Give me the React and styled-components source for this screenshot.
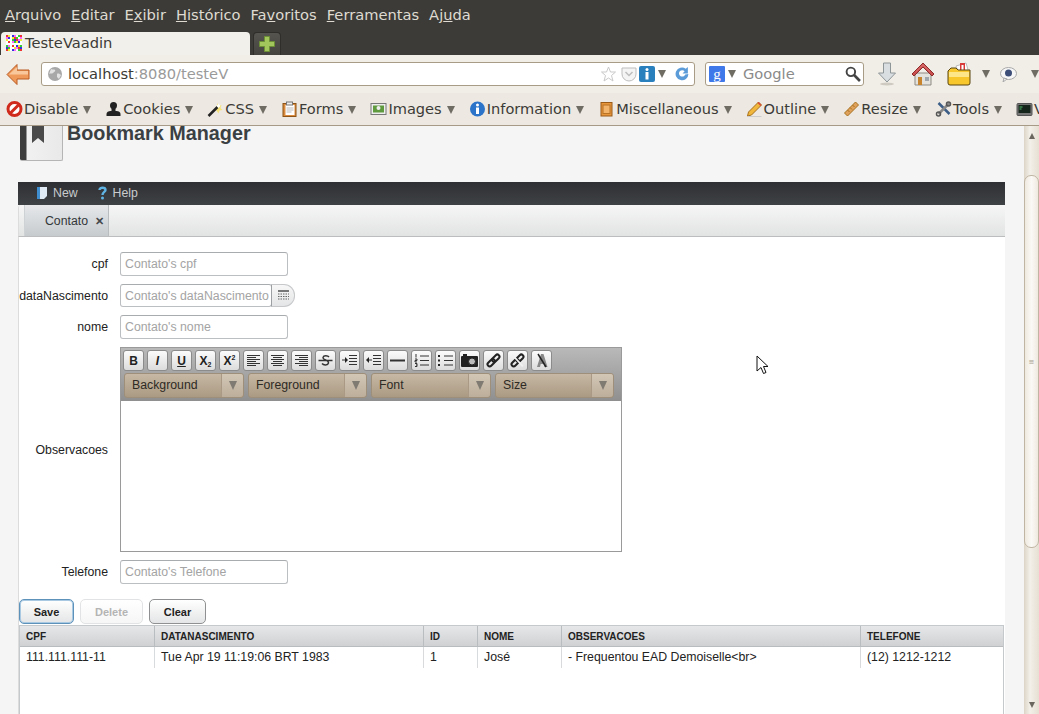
import React from "react";
import styled, { createGlobalStyle } from "styled-components";

const GlobalStyle = createGlobalStyle`
  html, body { margin: 0; padding: 0; overflow: hidden; background: #f5f5f5; }
  * { box-sizing: border-box; }
`;

const UI_FONT = `"DejaVu Sans", sans-serif`;
const WEB_FONT = `"Liberation Sans", Arial, sans-serif`;

const Window = styled.div`
  position: relative;
  width: 1039px;
  height: 714px;
  display: flex;
  flex-direction: column;
  overflow: hidden;
  font-family: ${UI_FONT};
`;

const MenuBar = styled.div`
  height: 30px;
  flex: none;
  display: flex;
  align-items: center;
  gap: 10px;
  padding: 0 0 1px 5px;
  background: #3c3b37;
  color: #dfdbd2;
  font-size: 14.67px;
`;

const TabStrip = styled.div`
  height: 25px;
  flex: none;
  display: flex;
  align-items: flex-end;
  padding-left: 1px;
  gap: 3px;
  background: #3c3b37;
`;

const Tab = styled.div`
  width: 249px;
  height: 23px;
  display: flex;
  align-items: center;
  gap: 3px;
  padding: 0 0 2px 5px;
  border-radius: 4px 4px 0 0;
  background: #f2f0ea;
  color: #3c3b37;
  font-size: 14.67px;
`;

const NewTab = styled.div`
  width: 28px;
  height: 23px;
  display: flex;
  align-items: center;
  justify-content: center;
  border: 1px solid #2f2e2b;
  border-bottom: 0;
  border-radius: 4px 4px 0 0;
  background: linear-gradient(#55544f, #45443f);
`;

const NavBar = styled.div`
  height: 38px;
  flex: none;
  display: flex;
  align-items: center;
  padding: 0 0 0 6px;
  background: #f1eee8;
`;

const BackWrap = styled.div`
  width: 35px;
  flex: none;
  display: flex;
`;

const Field = styled.div`
  height: 24px;
  display: flex;
  align-items: center;
  padding-left: ${(p) => p.$inset}px;
  border: 1px solid #a89c86;
  border-radius: 3px;
  background: #fff;
  font-size: 14.67px;
  width: ${(p) => p.$width}px;
  margin-right: ${(p) => p.$gap || 0}px;
  flex: none;
`;

const UrlHost = styled.span`
  color: #3c3b37;
  margin: -2px 0 0 6px;
`;

const UrlRest = styled.span`
  color: #9a9a9a;
  margin-top: -2px;
`;

const FieldEnd = styled.div`
  margin-left: auto;
  display: flex;
  align-items: center;
  padding-right: ${(p) => p.$pad}px;
`;

const SearchHint = styled.span`
  color: #8a8a8a;
  margin: -2px 0 0 7px;
`;

const Caret = styled.span`
  display: inline-block;
  width: 0;
  height: 0;
  flex: none;
  border-left: 4px solid transparent;
  border-right: 4px solid transparent;
  border-top: 8px solid #6f6c64;
  margin-left: ${(p) => p.$left || 0}px;
  margin-right: ${(p) => p.$right || 0}px;
  margin-top: ${(p) => p.$top || 0}px;
`;

const NavIcons = styled.div`
  display: flex;
  align-items: center;
  margin-left: 13px;
`;

const NavIcon = styled.span`
  display: flex;
  margin-left: ${(p) => p.$left || 0}px;
  margin-right: ${(p) => p.$gap || 0}px;
`;

const DevBar = styled.div`
  height: 33px;
  flex: none;
  display: flex;
  align-items: center;
  gap: 14px;
  padding: 0 0 1px 6px;
  background: #ede9e2;
  border-bottom: 1px solid #a79b88;
  color: #3c3b37;
  font-size: 14.6px;
  white-space: nowrap;
  overflow: hidden;
`;

const DevItem = styled.div`
  display: flex;
  align-items: center;
  gap: 1px;
  flex: none;
`;

const Viewport = styled.div`
  flex: 1;
  display: flex;
  min-height: 0;
`;

const Page = styled.div`
  flex: 1;
  min-width: 0;
  padding: 0 19px 0 18px;
  background: #f5f5f5;
  font-family: ${WEB_FONT};
  display: flex;
  flex-direction: column;
  overflow: hidden;
`;

const AppHeader = styled.div`
  height: 56px;
  flex: none;
  display: flex;
  align-items: flex-start;
  gap: 4px;
  padding-left: 2px;
  overflow: hidden;
`;

const BookIcon = styled.div`
  position: relative;
  width: 43px;
  height: 35px;
  border: 1px solid #b5b5b5;
  border-top: 0;
  border-left: 0;
  border-radius: 0 0 2px 2px;
  background: linear-gradient(90deg, #3d3d3d 0, #3d3d3d 6px, #f1f1f1 7px, #e9e9e9 100%);
  flex: none;
`;

const BookMark = styled.span`
  position: absolute;
  left: 12px;
  top: 0;
  width: 12px;
  height: 17px;
  background: #4a4a4a;
  clip-path: polygon(0 0, 100% 0, 100% 100%, 50% 70%, 0 100%);
`;

const AppTitle = styled.h1`
  margin: 0;
  font-size: 19.8px;
  line-height: 14px;
  font-weight: 700;
  color: #3b4043;
`;

const BlackMenu = styled.div`
  height: 23px;
  flex: none;
  display: flex;
  align-items: center;
  padding: 0 0 1px 18px;
  gap: 19px;
  background: linear-gradient(#2e2f33, #3f4245);
  color: #c9cbcd;
  font-size: 12.3px;
`;

const MenuEntry = styled.div`
  display: flex;
  align-items: center;
  gap: 5px;
`;

const Sheet = styled.div`
  flex: 1;
  min-height: 0;
  display: flex;
  flex-direction: column;
  background: #fff;
  border-radius: 3px 3px 0 0;
`;

const SheetTabs = styled.div`
  height: 32px;
  flex: none;
  display: flex;
  padding-left: 5px;
  background: linear-gradient(#f6f6f6, #e2e3e3);
  border-bottom: 1px solid #bcbdbe;
  border-left: 1px solid #dcdcdc;
  border-radius: 3px 3px 0 0;
`;

const SheetTab = styled.div`
  width: 85px;
  display: flex;
  align-items: center;
  justify-content: flex-end;
  gap: 7px;
  padding: 1px 4px 0 0;
  background: linear-gradient(#e6e8ea, #c6cbce);
  border-left: 1px solid #cfd2d4;
  border-right: 1px solid #b9bdc0;
  color: #33373a;
  font-size: 12.3px;
`;

const CloseMark = styled.span`
  font-size: 11px;
  color: #44484b;
  font-weight: 700;
`;

const SheetBody = styled.div`
  flex: 1;
  min-height: 0;
  display: flex;
  flex-direction: column;
  padding-top: 15px;
  border-left: 1px solid #dcdcdc;
`;

const Form = styled.div`
  display: grid;
  grid-template-columns: 89px auto;
  justify-content: start;
  column-gap: 12px;
  row-gap: 8px;
  align-items: center;
`;

const Label = styled.label`
  font-size: 12.3px;
  color: #222;
  text-align: right;
  white-space: nowrap;
  justify-self: end;
`;

const Input = styled.div`
  width: ${(p) => p.$width || 168}px;
  height: ${(p) => p.$height || 24}px;
  display: flex;
  align-items: center;
  padding-left: 4px;
  border: 1px solid #bcbfc2;
  border-top-color: #a9acaf;
  border-radius: 3px;
  background: #fff;
  color: #a4a4a4;
  font-size: 12.3px;
  white-space: nowrap;
  overflow: hidden;
`;

const DateWrap = styled.div`
  display: flex;
  align-items: center;
`;

const DateButton = styled.div`
  width: 24px;
  height: 23px;
  margin-left: -1px;
  display: flex;
  align-items: center;
  justify-content: center;
  border: 1px solid #c6c8ca;
  border-left-color: #9da0a3;
  border-radius: 0 11px 11px 0;
  background: linear-gradient(#f7f7f7, #e4e5e6);
`;

const Editor = styled.div`
  width: 502px;
  height: 205px;
  display: flex;
  flex-direction: column;
  border: 1px solid #9a9a9a;
  background: #fff;
`;

const EditorBar = styled.div`
  height: 53px;
  flex: none;
  display: flex;
  flex-direction: column;
  gap: 2px;
  padding: 2px 0 0 2px;
  background: linear-gradient(#b9b9b9, #8f8f8f);
`;

const ToolRow = styled.div`
  display: flex;
  gap: 3px;
`;

const ToolButton = styled.div`
  width: 21px;
  height: 21px;
  display: flex;
  align-items: center;
  justify-content: center;
  border: 1px solid #8b8b8b;
  border-radius: 3px;
  background: linear-gradient(#fbfbfb, #dcdcdc);
  color: #222;
  font-size: 12px;
  font-weight: 700;
  font-style: ${(p) => (p.$italic ? "italic" : "normal")};
  text-decoration: ${(p) => (p.$underline ? "underline" : "none")};
`;

const ToolSup = styled.span`
  font-size: 7px;
  align-self: ${(p) => (p.$low ? "flex-end" : "flex-start")};
  margin-top: ${(p) => (p.$low ? 0 : 3)}px;
  margin-bottom: ${(p) => (p.$low ? 2 : 0)}px;
`;

const SelectRow = styled.div`
  display: flex;
  gap: 4px;
  padding-left: 1px;
`;

const Select = styled.div`
  width: ${(p) => p.$width}px;
  height: 25px;
  display: flex;
  align-items: center;
  padding-left: 7px;
  border: 1px solid #9e8f7a;
  border-radius: 3px;
  background: linear-gradient(#c6b8a4, #ab9a83);
  color: #2e2a24;
  font-size: 12.3px;
  line-height: 21px;
`;

const SelectArrow = styled.span`
  margin-left: auto;
  align-self: stretch;
  width: 22px;
  display: flex;
  align-items: center;
  justify-content: center;
  border-left: 1px solid #a99985;
  background: linear-gradient(#d2c6b5, #bcae9a);
  border-radius: 0 3px 3px 0;
`;

const DownTri = styled.span`
  width: 0;
  height: 0;
  border-left: 4px solid transparent;
  border-right: 4px solid transparent;
  border-top: 9px solid #7f7a72;
`;

const Buttons = styled.div`
  display: flex;
  gap: 6px;
  margin: 15px 0 1px 0;
`;

const Button = styled.div`
  width: ${(p) => p.$width}px;
  height: 25px;
  display: flex;
  align-items: center;
  justify-content: center;
  border: 1px solid ${(p) => (p.$focus ? "#5d93bb" : p.$off ? "#e2e3e4" : "#8e9092")};
  border-radius: 5px;
  background: linear-gradient(#fff, ${(p) => (p.$off ? "#f6f6f6" : "#e4e5e6")});
  box-shadow: ${(p) => (p.$focus ? "0 0 0 1px #a9c9e2 inset" : "none")};
  color: ${(p) => (p.$off ? "#b4b4b4" : "#222")};
  font-size: 11px;
  font-weight: 700;
`;

const Table = styled.div`
  flex: 1;
  margin-right: 1px;
  border-left: 1px solid #c6c9cc;
  border-right: 1px solid #c6c9cc;
  background: #fff;
`;

const TableRow = styled.div`
  display: grid;
  grid-template-columns: 135px 269px 54px 84px 299px 1fr;
  height: ${(p) => (p.$head ? 22 : 21)}px;
  ${(p) =>
    p.$head &&
    `
    background: linear-gradient(#e6e7e9, #cfd1d3);
    border-top: 1px solid #c6c9cc;
    border-bottom: 1px solid #b9bcbf;
  `}
`;

const Cell = styled.div`
  display: flex;
  align-items: center;
  padding: 0 0 ${(p) => (p.$head ? 0 : 2)}px 6px;
  white-space: nowrap;
  overflow: hidden;
  color: #222;
  font-size: ${(p) => (p.$head ? 10 : 12.3)}px;
  font-weight: ${(p) => (p.$head ? 700 : 400)};
  border-right: 1px solid ${(p) => (p.$last ? "transparent" : p.$head ? "#babdc0" : "#d8dadc")};
`;

const ScrollBar = styled.div`
  width: 15px;
  flex: none;
  display: flex;
  flex-direction: column;
  background: linear-gradient(90deg, #dcd4c6, #f3f0ea 40%, #e6dfd2);
`;

const ScrollEnd = styled.div`
  height: ${(p) => p.$height}px;
  flex: none;
  display: flex;
  justify-content: center;
  align-items: ${(p) => (p.$up ? "flex-start" : "flex-end")};
  padding-top: ${(p) => (p.$up ? 7 : 0)}px;
  padding-bottom: ${(p) => (p.$up ? 0 : 6)}px;
`;

const ScrollThumb = styled.div`
  height: 373px;
  flex: none;
  display: flex;
  align-items: center;
  justify-content: center;
  border: 1px solid #c0b5a3;
  border-radius: 7px;
  background: linear-gradient(90deg, #efe9df, #fbf9f6 50%, #efe9df);
  color: #a59b8a;
  font-size: 7px;
  line-height: 2px;
`;

const UpTri = styled.span`
  width: 0;
  height: 0;
  border-left: 3.5px solid transparent;
  border-right: 3.5px solid transparent;
  border-bottom: 6px solid #6b675f;
`;

const ScrollDown = styled.span`
  width: 0;
  height: 0;
  border-left: 3.5px solid transparent;
  border-right: 3.5px solid transparent;
  border-top: 6px solid #6b675f;
`;

const Pointer = styled.svg`
  position: absolute;
  left: 756px;
  top: 355px;
`;

const Mnemonic = styled.span`
  text-decoration: underline;
`;

const menus = [
  ["", "A", "rquivo"],
  ["", "E", "ditar"],
  ["E", "x", "ibir"],
  ["", "H", "istórico"],
  ["Fa", "v", "oritos"],
  ["", "F", "erramentas"],
  ["Aj", "u", "da"],
];

const Favicon = () => {
  const colors = ["#e33", "#fff", "#33d", "#ee3", "#3c3", "#f6f", "#fff"];
  const cells = [];
  for (let y = 0; y < 8; y++) {
    for (let x = 0; x < 8; x++) {
      cells.push(
        <rect key={`${x}-${y}`} x={x * 2} y={y * 2} width="2" height="2" fill={colors[(x * 3 + y * 5 + x * y) % 7]} />
      );
    }
  }
  return <svg width="16" height="16">{cells}</svg>;
};

const PlusIcon = () => (
  <svg width="16" height="16" viewBox="0 0 16 16">
    <path d="M5.5 0.5h5v5h5v5h-5v5h-5v-5h-5v-5h5z" fill="#a3c65c" stroke="#6d8f35" />
  </svg>
);

const BackArrow = () => (
  <svg width="24" height="23" viewBox="0 0 24 23">
    <path d="M11 1.5 1 11.5l10 10v-5.5h12V7H11z" fill="#ef9a5a" stroke="#b85a22" />
    <path d="M3 11.5h19V8H11V4z" fill="#f9c79c" />
  </svg>
);

const Globe = () => (
  <svg width="14" height="14" viewBox="0 0 14 14">
    <circle cx="7" cy="7" r="7" fill="#a8a8a8" />
    <path d="M3 2c2 1 3 0 4 1s-1 2-2 3-3 0-4 1M9 7c1-1 3 0 4 1l-2 4-2-2z" fill="#e2e2e2" />
  </svg>
);

const Star = () => (
  <svg width="17" height="16" viewBox="0 0 16 16">
    <path d="M8 1l2 5h5l-4 3.500 1.500 5.500L8 12l-4.500 3L5 9.500 1 6h5z" fill="#fff" stroke="#c9c9c9" />
  </svg>
);

const Pocket = () => (
  <svg width="16" height="15" viewBox="0 0 16 15">
    <path d="M1 1h14v6a7 7 0 0 1-14 0z" fill="#f4f4f4" stroke="#bdbdbd" />
    <path d="M4.500 5 8 8.500 11.500 5" fill="none" stroke="#bdbdbd" strokeWidth="1.500" />
  </svg>
);

const InfoBadge = () => (
  <svg width="16" height="16" viewBox="0 0 16 16">
    <rect width="16" height="16" rx="2" fill="#2a7fbd" />
    <circle cx="8" cy="3.500" r="1.500" fill="#fff" />
    <rect x="6.500" y="6" width="3" height="7.500" fill="#fff" />
  </svg>
);

const Reload = () => (
  <svg width="16" height="16" viewBox="0 0 15 15">
    <path d="M13.500 7.500a6 6 0 1 1-2.500-5l2-1.500v6H8l2-2a3 3 0 1 0 .5 3z" fill="#5a9bd8" />
  </svg>
);

const GoogleBadge = () => (
  <svg width="16" height="16" viewBox="0 0 16 16">
    <rect width="16" height="16" rx="1" fill="#3f78e8" />
    <text x="8" y="13" textAnchor="middle" fontFamily="Liberation Serif, serif" fontSize="15" fill="#fff">g</text>
  </svg>
);

const Magnifier = () => (
  <svg width="16" height="16" viewBox="0 0 15 15">
    <circle cx="5.500" cy="5.500" r="4" fill="#fff" stroke="#444" strokeWidth="1.800" />
    <path d="M8.500 8.500 14 14" stroke="#444" strokeWidth="2.500" />
  </svg>
);

const DownloadArrow = () => (
  <svg width="20" height="24" viewBox="0 0 20 24">
    <path d="M6.500 1h7v10H18.500L10 20 1.500 11H6.500z" fill="#d9dee0" stroke="#8f9698" />
    <ellipse cx="10" cy="22" rx="7" ry="1.500" fill="#cfcac1" />
  </svg>
);

const HomeIcon = () => (
  <svg width="24" height="24" viewBox="0 0 24 24">
    <path d="M4 11h16v12H4z" fill="#e4e2dc" stroke="#8f8b83" />
    <path d="M12 1 1 12l2 2 9-9 9 9 2-2z" fill="#c94f4f" stroke="#8f2c2c" />
    <path d="M12 2 5 9v1l7-6 7 6V9z" fill="#d96a6a" />
    <rect x="7" y="15" width="4" height="8" fill="#c8842c" />
    <rect x="14" y="15" width="4" height="4" fill="#9fa7ad" />
  </svg>
);

const FolderIcon = () => (
  <svg width="25" height="24" viewBox="0 0 25 24">
    <path d="M9 4l10-3 3 10H12z" fill="#fff" stroke="#bbb" />
    <rect x="13" y="1" width="5" height="7" fill="#d83a3a" />
    <rect x="14.500" y="3" width="2" height="6" fill="#fff" />
    <path d="M1 9l3-3h5l2 2h12v13a2 2 0 0 1-2 2H3a2 2 0 0 1-2-2z" fill="#f7c72c" stroke="#5b4610" />
    <path d="M2 10h20v5H2z" fill="#fde68a" />
  </svg>
);

const ChatIcon = () => (
  <svg width="17" height="15" viewBox="0 0 17 15">
    <ellipse cx="8.500" cy="6.500" rx="8" ry="6" fill="#f7f7f7" stroke="#a8a8a8" />
    <circle cx="8.500" cy="6" r="3.500" fill="#3d4f78" />
    <path d="M4 11l-1 4 4-3z" fill="#f7f7f7" stroke="#a8a8a8" />
  </svg>
);

const devIcons = {
  disable: (
    <>
      <circle cx="8" cy="8" r="6.500" fill="#fff" stroke="#cf2a1c" strokeWidth="3" />
      <path d="M12 4l-8 8" stroke="#cf2a1c" strokeWidth="3" />
    </>
  ),
  cookies: (
    <>
      <circle cx="8" cy="4.500" r="3.500" fill="#222" />
      <rect x="6" y="6" width="4" height="5" fill="#222" />
      <path d="M1 15v-2c0-2 2-3 4-3h6c2 0 4 1 4 3v2z" fill="#222" />
    </>
  ),
  css: (
    <>
      <path d="M10 2l1 3 3-1-1 3 2 2-3 .5-1 3-2-3H7l2-2z" fill="#f5e27a" />
      <path d="M1 15 10 6" stroke="#222" strokeWidth="2.500" />
      <path d="M10 6 12 4" stroke="#fff" strokeWidth="2.500" />
    </>
  ),
  forms: (
    <>
      <rect x="1.500" y="2.500" width="13" height="13" fill="#d98a3c" stroke="#8c5418" />
      <rect x="4" y="4" width="9" height="10" fill="#fff" />
      <rect x="5" y="1" width="6" height="3" fill="#eee" stroke="#777" />
      <path d="M5 7h7M5 9h7M5 11h5" stroke="#bbb" />
    </>
  ),
  images: (
    <>
      <rect x="0.500" y="2.500" width="15" height="11" fill="#eee" stroke="#777" />
      <rect x="2.500" y="4.500" width="11" height="7" fill="#5f9a3f" />
      <circle cx="8" cy="7" r="2" fill="#eee" />
    </>
  ),
  info: (
    <>
      <circle cx="8" cy="8" r="7.500" fill="#2b74c9" />
      <circle cx="8" cy="4" r="1.500" fill="#fff" />
      <rect x="6.500" y="6.500" width="3" height="6.500" fill="#fff" />
    </>
  ),
  misc: (
    <>
      <rect x="2.500" y="1.500" width="11" height="13.500" fill="#e8963c" stroke="#9a5b18" />
      <rect x="4.500" y="4" width="7" height="8.500" fill="#f2b36a" stroke="#b87325" />
    </>
  ),
  outline: (
    <>
      <path d="M1 15l1-4L12 1l3 3L5 14z" fill="#f0b73c" stroke="#a8701c" />
      <path d="M11 2l3 3 1-1-3-3z" fill="#d8453a" />
      <path d="M1 15.500h14" stroke="#ccc" />
    </>
  ),
  resize: (
    <>
      <path d="M1 12 12 1l3 3L4 15z" fill="#dfa05c" stroke="#a8701c" />
      <path d="M4 9l2 2M6.500 6.500l2 2M9 4l2 2" stroke="#a8701c" />
    </>
  ),
  tools: (
    <>
      <path d="M3 2l11 11" stroke="#3b5d86" strokeWidth="2.500" />
      <path d="M14 2 3 13" stroke="#888" strokeWidth="2.500" />
      <circle cx="3" cy="13" r="2" fill="none" stroke="#555" strokeWidth="1.500" />
      <circle cx="13" cy="3" r="2" fill="none" stroke="#555" strokeWidth="1.500" />
    </>
  ),
  view: (
    <>
      <rect x="0.500" y="2.500" width="15" height="12" rx="1" fill="#777" stroke="#555" />
      <rect x="2" y="4" width="12" height="8" fill="#16251c" />
      <path d="M3 6h3M3 8h2" stroke="#4fc06a" />
    </>
  ),
};

const devItems = [
  ["disable", "Disable"],
  ["cookies", "Cookies"],
  ["css", "CSS"],
  ["forms", "Forms"],
  ["images", "Images"],
  ["info", "Information"],
  ["misc", "Miscellaneous"],
  ["outline", "Outline"],
  ["resize", "Resize"],
  ["tools", "Tools"],
  ["view", "View"],
];

// formatting glyphs of the rich text toolbar
const Glyph = ({ d, width = 15, strokeWidth = 1, children }) => (
  <svg width={width} height="13" viewBox={`0 0 ${width} 13`}>
    <path d={d} stroke="#333" strokeWidth={strokeWidth} fill="none" />
    {children}
  </svg>
);

const Chain = ({ broken }) => (
  <svg width="15" height="15" viewBox="0 0 14 14">
    <g transform="rotate(-45 7 7)" fill="none" stroke="#222" strokeWidth="1.900">
      <rect x="0" y="5" width="8" height="4" rx="2" />
      <rect x="6" y="5" width="8" height="4" rx="2" />
    </g>
    {broken && <path d="M2 1.500 12 12.500" stroke="#f2f2f2" strokeWidth="1.500" />}
  </svg>
);

const toolIcons = [
  <ToolButton key="b">B</ToolButton>,
  <ToolButton key="i" $italic>I</ToolButton>,
  <ToolButton key="u" $underline>U</ToolButton>,
  <ToolButton key="sub">X<ToolSup $low>2</ToolSup></ToolButton>,
  <ToolButton key="sup">X<ToolSup>2</ToolSup></ToolButton>,
  <ToolButton key="al">
    <Glyph d="M1 1.500h13M1 3.500h9M1 5.500h13M1 7.500h9M1 9.500h13M1 11.500h9" />
  </ToolButton>,
  <ToolButton key="ac">
    <Glyph d="M1 1.500h13M3 3.500h9M1 5.500h13M3 7.500h9M1 9.500h13M3 11.500h9" />
  </ToolButton>,
  <ToolButton key="ar">
    <Glyph d="M1 1.500h13M5 3.500h9M1 5.500h13M5 7.500h9M1 9.500h13M5 11.500h9" />
  </ToolButton>,
  <ToolButton key="st">
    <Glyph d="M11 3C10 1.500 5.500 1 5 3.500c-.5 2.500 6 2.500 5.500 5.500-.5 2.500-5 2.500-6.500.5M0.500 6.500h14" strokeWidth={1.400} />
  </ToolButton>,
  <ToolButton key="in">
    <Glyph d="M7 1.500h8M7 4.500h8M7 7.500h8M7 10.500h8M0 6h3">
      <path d="M3 3l3 3-3 3z" fill="#222" />
    </Glyph>
  </ToolButton>,
  <ToolButton key="out">
    <Glyph d="M7 1.500h8M7 4.500h8M7 7.500h8M7 10.500h8M3 6h3">
      <path d="M3 3 0 6l3 3z" fill="#222" />
    </Glyph>
  </ToolButton>,
  <ToolButton key="hr">
    <Glyph d="M0 6.500h15" strokeWidth={2} />
  </ToolButton>,
  <ToolButton key="ol">
    <Glyph d="M2 0v3.500M1 5h2v1.500H1V8h2M1 9.500h2v3H1M2 11h1M6 2h9M6 6.500h9M6 11h9" />
  </ToolButton>,
  <ToolButton key="ul">
    <Glyph d="M6 2h9M6 6.500h9M6 11h9">
      <path d="M0 1h2v2H0zM0 5.500h2v2H0zM0 10h2v2H0z" fill="#222" />
    </Glyph>
  </ToolButton>,
  <ToolButton key="img">
    <svg width="17" height="13" viewBox="0 0 17 13">
      <rect x="0" y="2" width="17" height="11" rx="1" fill="#222" />
      <rect x="2" y="0" width="4" height="2" fill="#222" />
      <circle cx="11" cy="7.500" r="3.500" fill="#bbb" stroke="#222" />
    </svg>
  </ToolButton>,
  <ToolButton key="ln"><Chain /></ToolButton>,
  <ToolButton key="un"><Chain broken /></ToolButton>,
  <ToolButton key="rf">
    <svg width="14" height="15" viewBox="0 0 14 15">
      <path d="M6 1h2.500l4 13H9.500l-.7-3H5.700L5 14H2z" fill="#888" />
      <path d="M3 1l8 13" stroke="#222" strokeWidth="1.500" />
    </svg>
  </ToolButton>,
];

const selects = [
  ["Background", 120],
  ["Foreground", 119],
  ["Font", 120],
  ["Size", 119],
];

const columns = ["CPF", "DATANASCIMENTO", "ID", "NOME", "OBSERVACOES", "TELEFONE"];
const row = [
  "111.111.111-11",
  "Tue Apr 19 11:19:06 BRT 1983",
  "1",
  "José",
  "- Frequentou EAD Demoiselle<br>",
  "(12) 1212-1212",
];

const App = () => (
  <Window>
    <GlobalStyle />
    <MenuBar>
      {menus.map(([pre, key, post]) => (
        <span key={pre + key + post}>
          {pre}
          <Mnemonic>{key}</Mnemonic>
          {post}
        </span>
      ))}
    </MenuBar>
    <TabStrip>
      <Tab>
        <Favicon />
        TesteVaadin
      </Tab>
      <NewTab>
        <PlusIcon />
      </NewTab>
    </TabStrip>
    <NavBar>
      <BackWrap>
        <BackArrow />
      </BackWrap>
      <Field $width={654} $gap={10} $inset={6}>
        <Globe />
        <UrlHost>localhost</UrlHost>
        <UrlRest>:8080/testeV</UrlRest>
        <FieldEnd $pad={4}>
          <NavIcon $gap={4}><Star /></NavIcon>
          <NavIcon $gap={2}><Pocket /></NavIcon>
          <InfoBadge />
          <Caret $left={3} $right={8} />
          <Reload />
        </FieldEnd>
      </Field>
      <Field $width={159} $inset={3}>
        <GoogleBadge />
        <Caret $left={3} />
        <SearchHint>Google</SearchHint>
        <FieldEnd $pad={2}>
          <Magnifier />
        </FieldEnd>
      </Field>
      <NavIcons>
        <NavIcon $gap={14}><DownloadArrow /></NavIcon>
        <NavIcon $gap={12}><HomeIcon /></NavIcon>
        <NavIcon $gap={10}><FolderIcon /></NavIcon>
        <Caret />
        <NavIcon $left={10} $gap={14}><ChatIcon /></NavIcon>
        <Caret />
      </NavIcons>
    </NavBar>
    <DevBar>
      {devItems.map(([icon, label]) => (
        <DevItem key={label}>
          <svg width="17" height="16" viewBox="0 0 16 16">{devIcons[icon]}</svg>
          {label}
          <Caret $left={4} $top={2} />
        </DevItem>
      ))}
    </DevBar>
    <Viewport>
      <Page>
        <AppHeader>
          <BookIcon><BookMark /></BookIcon>
          <AppTitle>Bookmark Manager</AppTitle>
        </AppHeader>
        <BlackMenu>
          <MenuEntry>
            <svg width="12" height="14" viewBox="0 0 12 14">
              <path d="M1 1h10v9l-3 3H1z" fill="#dfeaf4" />
              <path d="M1 1h3v12H1z" fill="#3f8fd0" />
            </svg>
            New
          </MenuEntry>
          <MenuEntry>
            <svg width="11" height="14" viewBox="0 0 10 14">
              <path d="M2 4c0-3 6-3 6 0 0 2-3 2-3 5" fill="none" stroke="#5fb4e4" strokeWidth="2.400" />
              <circle cx="5" cy="12" r="1.500" fill="#5fb4e4" />
            </svg>
            Help
          </MenuEntry>
        </BlackMenu>
        <Sheet>
          <SheetTabs>
            <SheetTab>
              Contato
              <CloseMark>✕</CloseMark>
            </SheetTab>
          </SheetTabs>
          <SheetBody>
            <Form>
              <Label>cpf</Label>
              <Input>Contato's cpf</Input>
              <Label>dataNascimento</Label>
              <DateWrap>
                <Input $width={152} $height={23}>Contato's dataNascimento</Input>
                <DateButton>
                  <svg width="13" height="13" viewBox="0 0 13 13">
                    <path d="M1 1h11v2H1z" fill="#777" />
                    <path d="M1 5h11M1 7.500h11M1 10h11" stroke="#666" strokeDasharray="1.500 1" />
                  </svg>
                </DateButton>
              </DateWrap>
              <Label>nome</Label>
              <Input>Contato's nome</Input>
              <Label>Observacoes</Label>
              <Editor>
                <EditorBar>
                  <ToolRow>{toolIcons}</ToolRow>
                  <SelectRow>
                    {selects.map(([name, width]) => (
                      <Select key={name} $width={width}>
                        {name}
                        <SelectArrow><DownTri /></SelectArrow>
                      </Select>
                    ))}
                  </SelectRow>
                </EditorBar>
              </Editor>
              <Label>Telefone</Label>
              <Input>Contato's Telefone</Input>
            </Form>
            <Buttons>
              <Button $width={55} $focus>Save</Button>
              <Button $width={63} $off>Delete</Button>
              <Button $width={57}>Clear</Button>
            </Buttons>
            <Table>
              <TableRow $head>
                {columns.map((c, i) => (
                  <Cell key={c} $head $last={i === columns.length - 1}>{c}</Cell>
                ))}
              </TableRow>
              <TableRow>
                {row.map((c, i) => (
                  <Cell key={c} $last={i === row.length - 1}>{c}</Cell>
                ))}
              </TableRow>
            </Table>
          </SheetBody>
        </Sheet>
      </Page>
      <ScrollBar>
        <ScrollEnd $height={49} $up><UpTri /></ScrollEnd>
        <ScrollThumb>≡</ScrollThumb>
        <ScrollEnd $height={166}><ScrollDown /></ScrollEnd>
      </ScrollBar>
    </Viewport>
    <Pointer width="13" height="21" viewBox="0 0 13 21">
      <path d="M1 1v15l4-3.500 2.500 6 2.500-1-2.500-6H12z" fill="#fff" stroke="#111" />
    </Pointer>
  </Window>
);

export default App;
